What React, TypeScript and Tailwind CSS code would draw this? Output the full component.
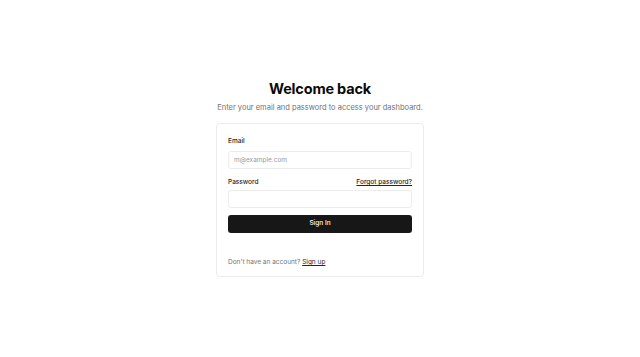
export default function App() {
  return (
    <div
      className="flex min-h-screen items-center justify-center bg-white text-[#0a0a0a]"
      style={{ fontFamily: "Inter, 'Noto Sans', sans-serif" }}
    >
      <div className="flex w-[208px] flex-col items-center">
        <h1 className="text-[14.5px] font-bold leading-[18px] tracking-[-0.2px]">Welcome back</h1>
        <p className="mt-[5px] whitespace-nowrap text-[7.5px] leading-[10px] text-[#737373]">
          Enter your email and password to access your dashboard.
        </p>

        <div className="mt-[10px] flex w-full flex-col rounded-[4px] border border-[#ececec] px-[11px] pt-[12px] pb-[9px]">
          <label className="text-[6.5px] font-medium leading-[10px] text-[#262626]">Email</label>
          <input
            type="email"
            placeholder="m@example.com"
            className="mt-[5px] h-[18px] rounded-[3px] border border-[#ececec] px-[5px] text-[6.5px] outline-none placeholder:text-[#9a9a9a]"
          />

          <div className="mt-[8px] flex items-center justify-between">
            <label className="text-[6.5px] font-medium leading-[10px] text-[#262626]">Password</label>
            <a href="#" className="text-[6.5px] font-medium leading-[10px] text-[#262626] underline underline-offset-1">
              Forgot password?
            </a>
          </div>
          <input
            type="password"
            className="mt-[3px] h-[18px] rounded-[3px] border border-[#ececec] px-[5px] text-[6.5px] outline-none"
          />

          <button className="mt-[7px] h-[18px] rounded-[3px] bg-[#171717] text-[6.5px] font-medium text-white">
            Sign In
          </button>

          <p className="mt-[24px] text-[6.5px] leading-[10px] text-[#737373]">
            Don&apos;t have an account?{" "}
            <a href="#" className="text-[#262626] underline underline-offset-1">
              Sign up
            </a>
          </p>
        </div>
      </div>
    </div>
  );
}
